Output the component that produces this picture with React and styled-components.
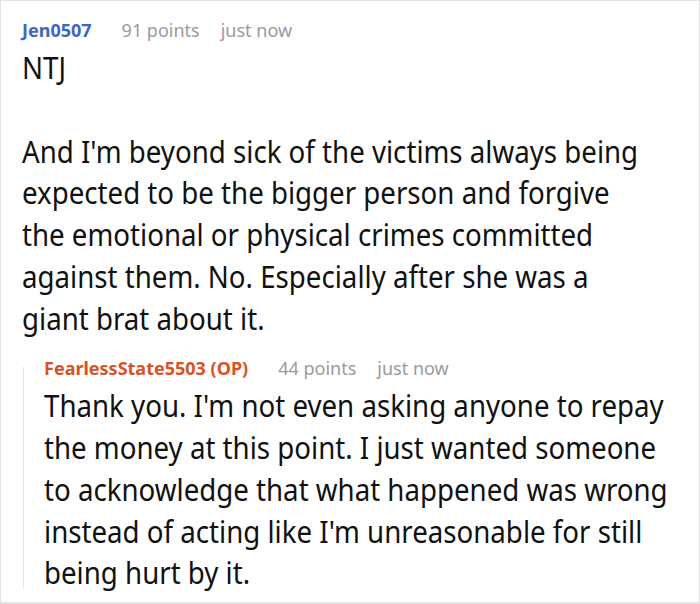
import React from "react";
import styled, { createGlobalStyle } from "styled-components";

const Global = createGlobalStyle`
  html, body { margin: 0; padding: 0; background: #fff; }
  body { font-family: "Noto Sans", "Open Sans", sans-serif; }
`;

/* comment text is set in a narrowed cut of the face */
const NARROW = 0.922;

const Frame = styled.div`
  box-sizing: border-box;
  width: 700px;
  height: 604px;
  border: 1px solid #e3e3e3;
  border-bottom-width: 2px;
  padding: 17px 0 0 21px;
  overflow: hidden;
`;

const Comment = styled.div`
  display: flex;
  flex-direction: column;
`;

const Meta = styled.div`
  display: flex;
  align-items: baseline;
  font-size: 18px;
  line-height: 24px;
  white-space: nowrap;
`;

const Author = styled.span`
  font-weight: 700;
  color: ${(p) => p.$color};
  margin-right: 30px;
`;

const Info = styled.span`
  color: #9a9a9a;
  margin-right: 21px;
`;

const Body = styled.div`
  font-size: 30px;
  line-height: 41.75px;
  color: #111;
  margin-top: 5px;
  width: calc(${(p) => p.$span}px / ${NARROW});
  transform: scaleX(${NARROW});
  transform-origin: 0 0;
  p { margin: 0; }
`;

const Reply = styled.div`
  position: relative;
  margin-top: 17px;
  padding-left: 22px;
  display: flex;
  flex-direction: column;

  /* thread line joining the reply to its parent */
  &::before {
    content: "";
    position: absolute;
    left: 1px;
    top: 11px;
    bottom: 6px;
    width: 1px;
    background: #e4e4e4;
  }
`;

export default function App() {
  return (
    <>
      <Global />
      <Frame>
        <Comment>
          <Meta>
            <Author $color="#3a67c2">Jen0507</Author>
            <Info>91 points</Info>
            <Info>just now</Info>
          </Meta>
          <Body $span={629}>
            <p>NTJ</p>
            <p>&nbsp;</p>
            <p>
              And I'm beyond sick of the victims always being expected to be
              the bigger person and forgive the emotional or physical crimes
              committed against them. No. Especially after she was a giant brat
              about it.
            </p>
          </Body>
        </Comment>
        <Reply>
          <Meta>
            <Author $color="#d9521f">FearlessState5503 (OP)</Author>
            <Info>44 points</Info>
            <Info>just now</Info>
          </Meta>
          <Body $span={639}>
            <p>
              Thank you. I'm not even asking anyone to repay the money at this
              point. I just wanted someone to acknowledge that what happened was
              wrong instead of acting like I'm unreasonable for still being
              hurt by it.
            </p>
          </Body>
        </Reply>
      </Frame>
    </>
  );
}
